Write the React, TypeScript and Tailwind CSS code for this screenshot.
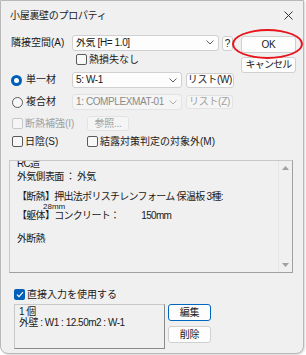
import type { ReactNode } from 'react'

function Chevron({ color = '#606060' }: { color?: string }) {
  return (
    <svg width="8" height="5" viewBox="0 0 8 5" fill="none" className="shrink-0">
      <path d="M0.5 0.5 L4 4 L7.5 0.5" stroke={color} strokeWidth="1" />
    </svg>
  )
}

function Btn({ children, className = '', disabled = false, focus = false }: { children: ReactNode; className?: string; disabled?: boolean; focus?: boolean }) {
  const look = disabled
    ? 'border-[#e3e3e3] bg-[#f5f5f5] text-[#a0a0a0]'
    : focus
      ? 'border-[#0067c0] bg-[#fdfdfd] text-[#1a1a1a]'
      : 'border-[#d0d0d0] bg-[#fdfdfd] text-[#1a1a1a]'
  return (
    <div className={`flex items-center justify-center rounded-[3px] border text-[10px] leading-none tracking-[-0.3px] ${look} ${className}`}>
      {children}
    </div>
  )
}

function Combo({ text, className = '', disabled = false }: { text: string; className?: string; disabled?: boolean }) {
  return (
    <div
      className={`flex h-[16px] items-center justify-between rounded-[3px] border pl-[3px] pr-[4px] text-[10px] leading-none tracking-[-0.4px] ${
        disabled ? 'border-[#e3e3e3] bg-[#f5f5f5] text-[#8a8a8a]' : 'border-[#d0d0d0] bg-[#fdfdfd] text-[#1a1a1a]'
      } ${className}`}
    >
      <span className="overflow-hidden">{text}</span>
      <Chevron color={disabled ? '#b0b0b0' : '#606060'} />
    </div>
  )
}

function Check({ checked = false, disabled = false }: { checked?: boolean; disabled?: boolean }) {
  if (checked) {
    return (
      <div className="flex h-[11px] w-[11px] shrink-0 items-center justify-center rounded-[2px] bg-[#005fb8]">
        <svg width="8" height="7" viewBox="0 0 8 7" fill="none">
          <path d="M1 3.6 L3 5.6 L7 1.2" stroke="#fff" strokeWidth="1.2" />
        </svg>
      </div>
    )
  }
  return (
    <div
      className={`h-[11px] w-[11px] shrink-0 rounded-[2px] border ${
        disabled ? 'border-[#c8c8c8] bg-[#f5f5f5]' : 'border-[#5a5a5a] bg-[#f8f8f8]'
      }`}
    />
  )
}

function Radio({ on = false }: { on?: boolean }) {
  return on ? (
    <div className="flex h-[11px] w-[11px] shrink-0 items-center justify-center rounded-full bg-[#005fb8]">
      <div className="h-[5px] w-[5px] rounded-full bg-white" />
    </div>
  ) : (
    <div className="h-[11px] w-[11px] shrink-0 rounded-full border border-[#5a5a5a] bg-[#f8f8f8]" />
  )
}

export default function App() {
  return (
    <div className="h-[355px] w-[306px] whitespace-nowrap bg-white [font-family:'Liberation_Sans','Noto_Sans_CJK_JP',sans-serif] text-[#1a1a1a]">
      <div className="relative h-[354px] w-[304px] rounded-b-[8px] border border-[#b8b8b8] bg-[#f0f0f0] shadow-[1px_1px_2px_rgba(0,0,0,0.15)]">
        {/* Title bar */}
        <div className="flex h-[29px] items-center justify-between pl-[9px] pr-[10px]">
          <span className="text-[10px] tracking-[-0.3px]">小屋裏壁のプロパティ</span>
          <svg width="9" height="9" viewBox="0 0 9 9">
            <path d="M0.5 0.5 L8.5 8.5 M8.5 0.5 L0.5 8.5" stroke="#333" strokeWidth="1" />
          </svg>
        </div>

        <div className="pl-[9px] text-[10px] leading-none">
          {/* Top block */}
          <div className="flex">
            <div className="flex flex-col">
              <div className="mt-[4px] flex items-center">
                <span className="w-[62px] pl-[1px]">隣接空間(A)</span>
                <Combo text="外気 [H= 1.0]" className="w-[147px]" />
                <Btn className="ml-[3px] mt-[2px] h-[15px] w-[11px]">?</Btn>
              </div>
              <div className="ml-[66px] mt-[3px] flex items-center gap-[2px]">
                <Check />
                <span>熱損失なし</span>
              </div>
            </div>
            <div className="ml-[8px] mt-[6px] flex flex-col gap-[4px]">
              <Btn className="h-[17px] w-[55px]">OK</Btn>
              <Btn className="h-[16px] w-[55px] tracking-[-0.8px]">キャンセル</Btn>
            </div>
          </div>

          {/* 単一材 */}
          <div className="mt-[-1px] flex items-center">
            <div className="flex w-[62px] items-center gap-[4px] pl-[1px]">
              <Radio on />
              <span>単一材</span>
            </div>
            <Combo text="5: W-1" className="w-[110px]" />
            <Btn className="ml-[4px] h-[15px] w-[48px]">リスト(W)</Btn>
          </div>

          {/* 複合材 */}
          <div className="mt-[6px] flex items-center">
            <div className="flex w-[62px] items-center gap-[3px] pl-[2px]">
              <Radio />
              <span>複合材</span>
            </div>
            <Combo text="1: COMPLEXMAT-01" className="w-[110px]" disabled />
            <Btn className="ml-[4px] h-[14px] w-[47px]" disabled>リスト(Z)</Btn>
          </div>

          {/* 断熱補強 */}
          <div className="mt-[6px] flex items-center">
            <div className="flex w-[77px] items-center gap-[2px] pl-[2px]">
              <Check disabled />
              <span className="text-[#a0a0a0]">断熱補強(I)</span>
            </div>
            <Btn className="h-[15px] w-[42px]" disabled>参照...</Btn>
          </div>

          {/* 日陰 */}
          <div className="mt-[5px] flex items-center">
            <div className="flex w-[77px] items-center gap-[2px] pl-[2px]">
              <Check />
              <span>日陰(S)</span>
            </div>
            <div className="flex items-center gap-[2px]">
              <Check />
              <span>結露対策判定の対象外(M)</span>
            </div>
          </div>

          {/* Read-only memo */}
          <div className="ml-[-1px] mt-[13px] flex h-[113px] w-[284px] overflow-hidden border border-[#a0a0a0] border-l-[#c8c8c8] border-t-[#c8c8c8]">
            <div className="flex-1 overflow-hidden pl-[7px] text-[10px] leading-[10px] tracking-[-0.7px]">
              <div className="mt-[-2px]">RC造</div>
              <div className="mt-[3px]">外気側表面 ： 外気</div>
              <div className="mt-[10px]">【断熱】押出法ポリスチレンフォーム 保温板 3種:</div>
              <div className="pl-[26px] text-[8px] leading-[9px] tracking-normal">28mm</div>
              <div>
                【躯体】コンクリート：<span className="ml-[22px]">150mm</span>
              </div>
              <div className="mt-[13px]">外断熱</div>
            </div>
            <div className="flex w-[14px] flex-col items-center justify-between border-l border-[#e6e6e6] bg-[#f0f0f0] py-[5px]">
              <svg width="7" height="4" viewBox="0 0 7 4">
                <path d="M0 4 L3.5 0 L7 4 Z" fill="#a0a0a0" />
              </svg>
              <svg width="7" height="4" viewBox="0 0 7 4">
                <path d="M0 0 L3.5 4 L7 0 Z" fill="#a0a0a0" />
              </svg>
            </div>
          </div>

          {/* 直接入力 */}
          <div className="ml-[4px] mt-[16px] flex items-center gap-[2px]">
            <Check checked />
            <span>直接入力を使用する</span>
          </div>

          {/* List + buttons */}
          <div className="ml-[4px] mt-[4px] flex gap-[3px]">
            <div className="h-[45px] w-[151px] border border-[#c8c8c8] border-b-[#8a8a8a] border-r-[#8a8a8a] pl-[4px] pt-[1px] text-[10px] leading-[11px] tracking-[-0.5px]">
              <div>1 個</div>
              <div>外壁 : W1 : 12.50m2 : W-1</div>
            </div>
            <div className="flex flex-col gap-[5px]">
              <Btn className="h-[17px] w-[43px]" focus>編集</Btn>
              <Btn className="h-[17px] w-[43px]">削除</Btn>
            </div>
          </div>
        </div>

        {/* Red annotation ellipse around OK */}
        <div className="pointer-events-none absolute left-[231px] top-[28px] h-[30px] w-[71px] rounded-[50%] border-2 border-[#e8141c]" />
      </div>
    </div>
  )
}
